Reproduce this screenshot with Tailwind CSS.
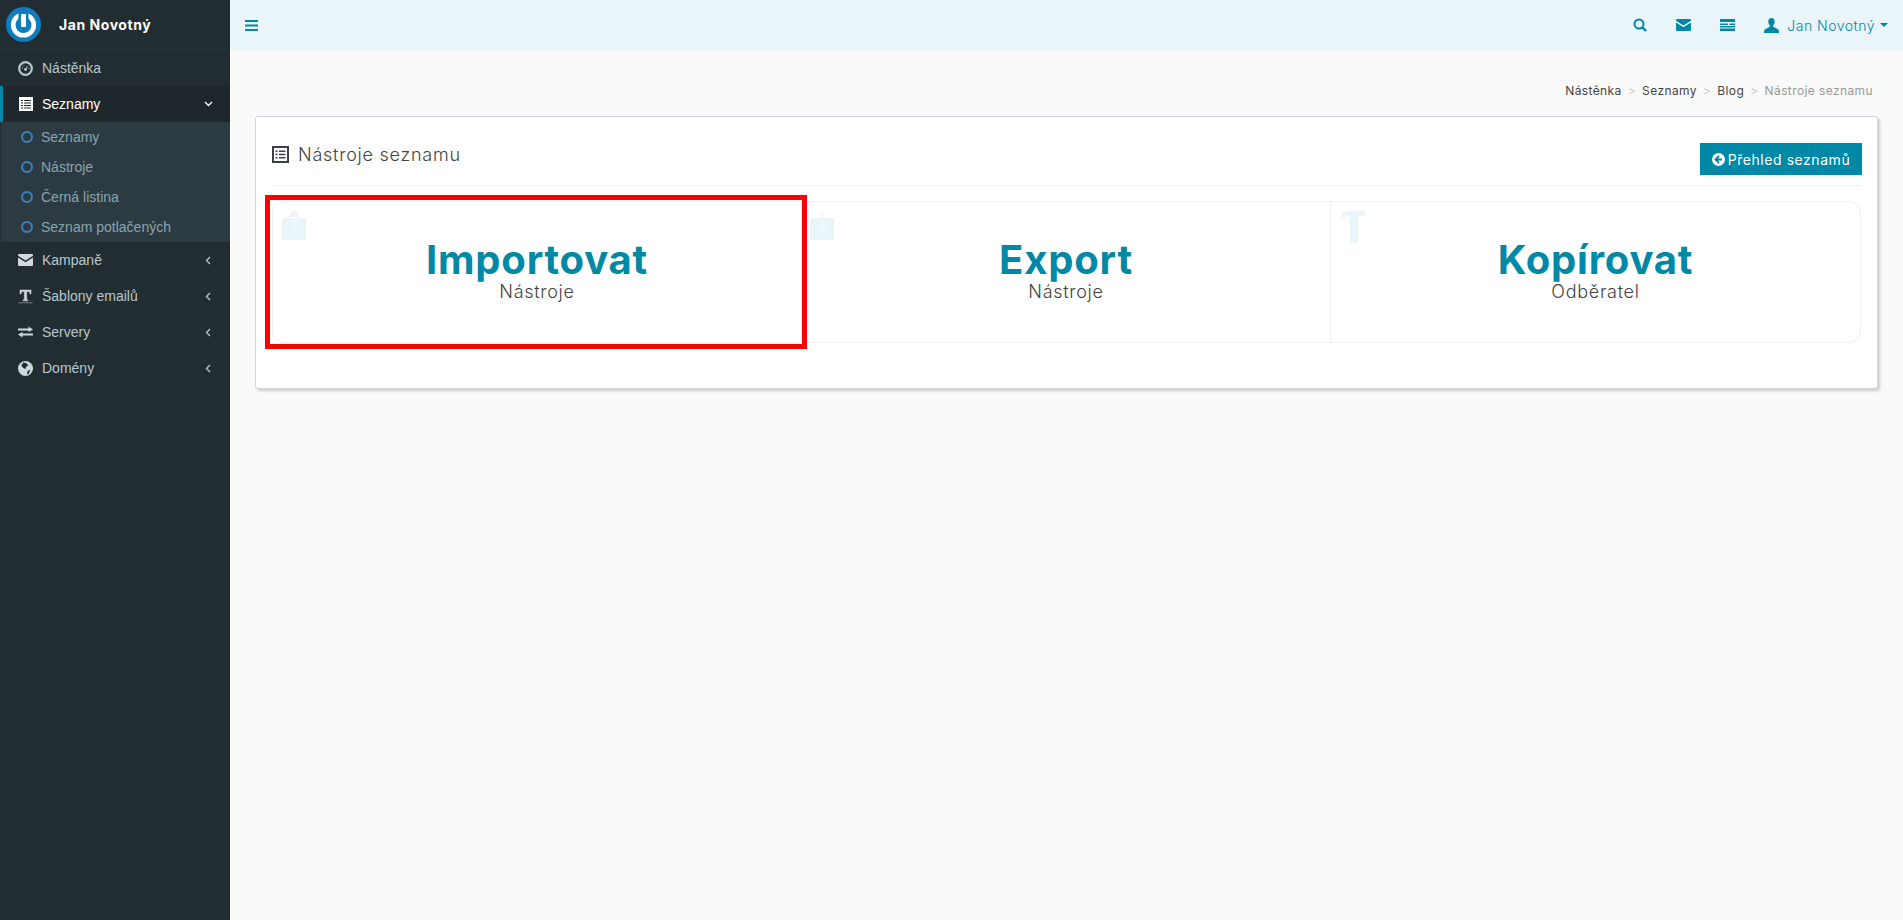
<!DOCTYPE html>
<html lang="en">
<head>
    <meta charset="UTF-8">
    <title>Nástroje seznamu</title>
    <script src="https://cdn.jsdelivr.net/npm/@tailwindcss/browser@4"></script>
</head>
<body class="bg-[#fafafa] h-[920px] overflow-hidden font-['Liberation_Sans',sans-serif]">
<div class="flex h-[920px]">
    <!-- sidebar -->
    <aside class="w-[230px] shrink-0 bg-[#222d32] text-[14px] text-[#b8c7ce]">
        <div class="h-[50px] flex items-center border-b border-[#2b363b] pl-[6px]">
            <svg width="35" height="35" viewBox="0 0 35 35"><circle cx="17.500" cy="17.500" r="17.500" fill="#0f7dbd"/><circle cx="17.500" cy="18" r="10.300" fill="none" stroke="#fff" stroke-width="4.600"/><rect x="12.500" y="3" width="10" height="15" fill="#0f7dbd"/><rect x="15" y="7" width="5" height="13" rx="1" fill="#fff"/></svg>
            <span class="ml-[18px] font-['Inter',sans-serif] font-bold text-[14px] text-white tracking-[0.55px]">Jan Novotný</span>
        </div>
        <a class="h-[36px] flex items-center pl-[18px]">
            <svg class="w-[15px] h-[15px] mr-[9px]" viewBox="0 0 15 15"><circle cx="7.500" cy="7.500" r="6.300" fill="#222d32" stroke="#b8c7ce" stroke-width="2.200"/><circle cx="7.500" cy="8.500" r="1.400" fill="#b8c7ce"/><path d="M7.500 8.500l2-3.500M4 7h1M10.500 7.500h1M5.500 4.500h.8" stroke="#b8c7ce"/></svg>
            Nástěnka
        </a>
        <a class="h-[36px] flex items-center pl-[16px] pr-[17px] bg-[#1e282c] border-l-[3px] border-[#0088a7] text-white">
            <svg class="w-[14px] h-[14px] mr-[9px]" viewBox="0 0 14 14"><rect width="14" height="14" fill="#fff"/><path d="M2 3h2v1H2zM5 3h7v1H5zM2 5.500h2v1H2zM5 5.500h7v1H5zM2 8h2v1H2zM5 8h7v1H5zM2 10.500h2v1H2zM5 10.500h7v1H5z" fill="#222d32"/></svg>
            <span class="flex-1">Seznamy</span>
            <svg width="9" height="6" viewBox="0 0 9 6"><path d="M1 1l3.500 3.500L8 1" fill="none" stroke="#fff" stroke-width="1.300"/></svg>
        </a>
        <div class="h-[120px] ml-px bg-[#2c3b41] text-[#8aa4af]">
            <a class="h-[30px] flex items-center pl-[20px]"><span class="w-[12px] h-[12px] rounded-full border-2 border-[#3c80c4] mr-[8px]"></span>Seznamy</a>
            <a class="h-[30px] flex items-center pl-[20px]"><span class="w-[12px] h-[12px] rounded-full border-2 border-[#3c80c4] mr-[8px]"></span>Nástroje</a>
            <a class="h-[30px] flex items-center pl-[20px]"><span class="w-[12px] h-[12px] rounded-full border-2 border-[#3c80c4] mr-[8px]"></span>Černá listina</a>
            <a class="h-[30px] flex items-center pl-[20px]"><span class="w-[12px] h-[12px] rounded-full border-2 border-[#3c80c4] mr-[8px]"></span>Seznam potlačených</a>
        </div>
        <a class="h-[36px] flex items-center pl-[18px] pr-[19px]">
            <svg class="w-[15px] h-[12px] mr-[9px]" viewBox="0 0 15 12"><path d="M1 0h13a1 1 0 0 1 1 1v.8L7.500 6.500 0 1.800V1a1 1 0 0 1 1-1zM0 3.500l7.500 4.700L15 3.500V11a1 1 0 0 1-1 1H1a1 1 0 0 1-1-1z" fill="#cfd8dc"/></svg>
            <span class="flex-1">Kampaně</span>
            <svg width="6" height="9" viewBox="0 0 6 9"><path d="M5 1L1.500 4.500 5 8" fill="none" stroke="#b8c7ce" stroke-width="1.300"/></svg>
        </a>
        <a class="h-[36px] flex items-center pl-[18px] pr-[19px]">
            <svg class="w-[15px] h-[15px] mr-[9px]" viewBox="0 0 15 15"><path d="M2 1h11v4h-1L11.500 2.500H8.700V10.500l1.300.6v.7H5v-.7l1.300-.6V2.500H3.500L3 5H2zM0.500 13.800h14" fill="#cfd8dc" stroke="#cfd8dc" stroke-width=".5"/></svg>
            <span class="flex-1">Šablony emailů</span>
            <svg width="6" height="9" viewBox="0 0 6 9"><path d="M5 1L1.500 4.500 5 8" fill="none" stroke="#b8c7ce" stroke-width="1.300"/></svg>
        </a>
        <a class="h-[36px] flex items-center pl-[18px] pr-[19px]">
            <svg class="w-[15px] h-[12px] mr-[9px]" viewBox="0 0 15 12"><path d="M0 2.500h10.500V0.500L15 3.500 10.500 6V4.500H0zM15 7.500H4.500V6L0 8.500 4.500 11.500V9.500H15z" fill="#cfd8dc"/></svg>
            <span class="flex-1">Servery</span>
            <svg width="6" height="9" viewBox="0 0 6 9"><path d="M5 1L1.500 4.500 5 8" fill="none" stroke="#b8c7ce" stroke-width="1.300"/></svg>
        </a>
        <a class="h-[36px] flex items-center pl-[18px] pr-[19px]">
            <svg class="w-[15px] h-[15px] mr-[9px]" viewBox="0 0 14 14"><circle cx="7" cy="7" r="7" fill="#cfd8dc"/><path d="M5 1.500l3 .5 1.500 2-2 1.500-.5 2-2-1-2-2zM9 9l2.500-.5L10 12l-1.500.5z" fill="#222d32"/></svg>
            <span class="flex-1">Domény</span>
            <svg width="6" height="9" viewBox="0 0 6 9"><path d="M5 1L1.500 4.500 5 8" fill="none" stroke="#b8c7ce" stroke-width="1.300"/></svg>
        </a>
    </aside>

    <main class="flex-1 min-w-0">
        <!-- top bar -->
        <header class="h-[50px] bg-[#e9f5f8] flex items-center pl-[15px] pr-[15px] text-[#0088a7]">
            <svg width="13" height="11" viewBox="0 0 13 11"><path d="M0 0h13v2H0zM0 4.500h13v2H0zM0 9h13v2H0z" fill="#0088a7"/></svg>
            <div class="ml-auto flex items-center">
                <svg width="14" height="14" viewBox="0 0 14 14"><circle cx="6" cy="6" r="4.500" fill="none" stroke="#0088a7" stroke-width="2"/><path d="M9.500 9.500L13 13" stroke="#0088a7" stroke-width="2.400"/></svg>
                <svg class="ml-[29px]" width="15" height="12" viewBox="0 0 15 12"><path d="M1 0h13a1 1 0 0 1 1 1v.8L7.500 6.500 0 1.800V1a1 1 0 0 1 1-1zM0 3.500l7.500 4.700L15 3.500V11a1 1 0 0 1-1 1H1a1 1 0 0 1-1-1z" fill="#0088a7"/></svg>
                <svg class="ml-[29px]" width="15" height="12" viewBox="0 0 15 12"><path d="M0 0h15v3H0zM0 4.500h8v1.500H0zM9.500 4.500h5.500v1.500H9.500zM0 7h15v1.500H0zM0 9.500h15V12H0z" fill="#0088a7"/></svg>
                <svg class="ml-[29px]" width="15" height="15" viewBox="0 0 15 15"><path d="M7.500 0C5.300 0 4.300 1.700 4.300 3.600c0 1.500.6 3 1.500 3.800v1.300L1.500 11C.5 11.500 0 12.500 0 14v1h15v-1c0-1.500-.5-2.500-1.500-3L9.200 8.700V7.400c.9-.8 1.500-2.300 1.500-3.800C10.700 1.700 9.700 0 7.500 0z" fill="#0088a7"/></svg>
                <span class="ml-[8px] font-['Inter',sans-serif] font-light text-[14px] tracking-[0.5px]">Jan Novotný</span>
                <span class="ml-[5px] w-0 h-0 border-x-[4px] border-x-transparent border-t-[4px] border-t-[#0088a7]"></span>
            </div>
        </header>

        <!-- breadcrumb -->
        <nav class="h-[66px] pt-[33px] pr-[30px] flex justify-end gap-[6px] font-['Inter',sans-serif] text-[12px] leading-[16px] tracking-[0.4px] text-[#444]">
            <span>Nástěnka</span><span class="text-[#ccc]">&gt;</span>
            <span>Seznamy</span><span class="text-[#ccc]">&gt;</span>
            <span>Blog</span><span class="text-[#ccc]">&gt;</span>
            <span class="text-[#999]">Nástroje seznamu</span>
        </nav>

        <!-- card -->
        <section class="relative ml-[25px] mr-[25px] h-[273px] bg-white rounded-[3px] border border-[#d2d6de] shadow-[2px_2px_3px_rgba(0,0,0,0.18)] px-[16px]">
            <div class="h-[69px] flex items-start justify-between border-b border-[#eee] pt-[26px]">
                <div class="flex items-center h-[22px] text-[#444]">
                    <svg width="17" height="17" viewBox="0 0 17 17"><rect x="1" y="1" width="15" height="15" fill="none" stroke="#3a3f4a" stroke-width="2"/><path d="M3.500 4.500h2v1.500h-2zM7 4.500h6.500v1.500H7zM3.500 7.800h2v1.500h-2zM7 7.800h6.500v1.500H7zM3.500 11h2v1.500h-2zM7 11h6.500v1.500H7z" fill="#3a3f4a"/></svg>
                    <h1 class="ml-[9px] font-['Inter',sans-serif] text-[18px] font-light tracking-[0.75px]">Nástroje seznamu</h1>
                </div>
                <button class="w-[162px] h-[32px] mr-[-1px] bg-[#0088a7] text-white font-['Inter',sans-serif] text-[14px] tracking-[0.55px] flex items-center justify-center">
                    <svg class="mr-[3px]" width="13" height="13" viewBox="0 0 13 13"><circle cx="6.500" cy="6.500" r="6.500" fill="#fff"/><path d="M7 3L3.500 6.500 7 10M3.800 6.500H10" fill="none" stroke="#0088a7" stroke-width="1.800"/></svg>
                    Přehled seznamů
                </button>
            </div>
            <div class="mt-[15px] h-[142px] grid grid-cols-3 border border-[#eee] rounded-[12px]">
                <div class="relative flex flex-col items-center pt-[36px] border-r border-[#eee]">
                    <svg class="absolute left-[9px] top-[8px]" width="24" height="30" viewBox="0 0 24 30"><path d="M0 8h24v22H0z" fill="#e9f5f8"/><path d="M12 0l6 7h-5.500v12h-1V7H6z" fill="#e9f5f8"/><path d="M11.500 8h1v11h-1z" fill="#fff"/></svg>
                    <div class="font-['Inter',sans-serif] font-bold text-[40px] leading-[44px] tracking-[0.8px] text-[#0088a7]">Importovat</div>
                    <div class="font-['Inter',sans-serif] font-light text-[18px] leading-[20px] tracking-[0.7px] text-[#444]">Nástroje</div>
                </div>
                <div class="relative flex flex-col items-center pt-[36px] border-r border-[#eee]">
                    <svg class="absolute left-[8px] top-[10px]" width="24" height="28" viewBox="0 0 24 28"><path d="M0 6h24v22H0z" fill="#e9f5f8"/><path d="M12 0v18M7 13l5 6 5-6" fill="none" stroke="#fff"/><path d="M11.500 0h1v6h-1z" fill="#e9f5f8"/></svg>
                    <div class="font-['Inter',sans-serif] font-bold text-[40px] leading-[44px] tracking-[0.8px] text-[#0088a7]">Export</div>
                    <div class="font-['Inter',sans-serif] font-light text-[18px] leading-[20px] tracking-[0.7px] text-[#444]">Nástroje</div>
                </div>
                <div class="relative flex flex-col items-center pt-[36px]">
                    <svg class="absolute left-[10px] top-[8px]" width="24" height="33" viewBox="0 0 24 33"><path d="M4 2c3-1.500 14-1.500 20-1.500V6h-7v27H9V6C5 6 2 8 0 10 0 6 2 3 4 2z" fill="#e9f5f8"/></svg>
                    <div class="font-['Inter',sans-serif] font-bold text-[40px] leading-[44px] tracking-[0.8px] text-[#0088a7]">Kopírovat</div>
                    <div class="font-['Inter',sans-serif] font-light text-[18px] leading-[20px] tracking-[0.7px] text-[#444]">Odběratel</div>
                </div>
            </div>
            <!-- annotation over the first tile -->
            <div class="absolute left-[9px] top-[78px] w-[542px] h-[154px] border-[5px] border-[#ff0000]"></div>
        </section>
    </main>
</div>
</body>
</html>
